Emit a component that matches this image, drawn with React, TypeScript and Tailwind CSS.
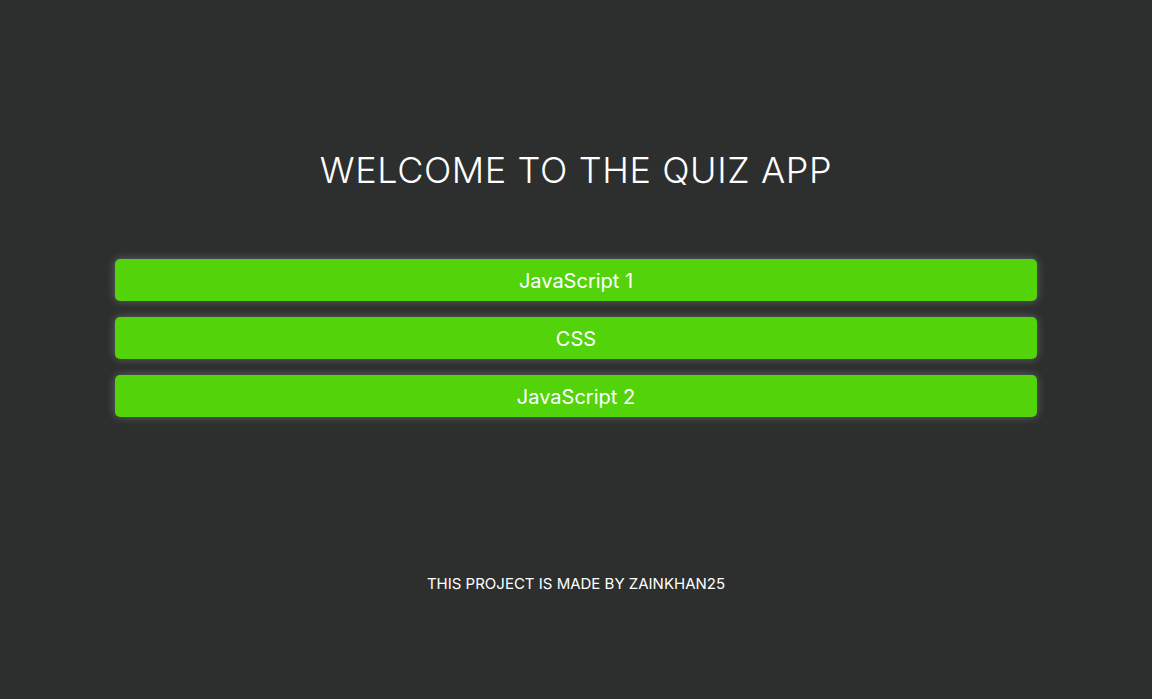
export default function App() {
  const items = ["JavaScript 1", "CSS", "JavaScript 2"];
  return (
    <div
      className="min-h-[699px] w-full bg-[#2d2f2e] text-white flex flex-col items-center"
      style={{ fontFamily: "Inter, 'Noto Sans', sans-serif" }}
    >
      <h1 className="mt-[148px] text-[36px] leading-[44px] font-light tracking-[0.6px]">WELCOME TO THE QUIZ APP</h1>
      <div className="mt-[67px] w-4/5 flex flex-col gap-4">
        {items.map((t) => (
          <button
            key={t}
            className="h-[42px] w-full rounded-[5px] bg-[#53d30a] text-white text-[20px] pt-[1px] shadow-[0_0_8px_rgba(170,170,170,0.45)]"
          >
            {t}
          </button>
        ))}
      </div>
      <p className="mt-[157px] text-[15px] leading-[20px]">THIS PROJECT IS MADE BY ZAINKHAN25</p>
    </div>
  );
}
